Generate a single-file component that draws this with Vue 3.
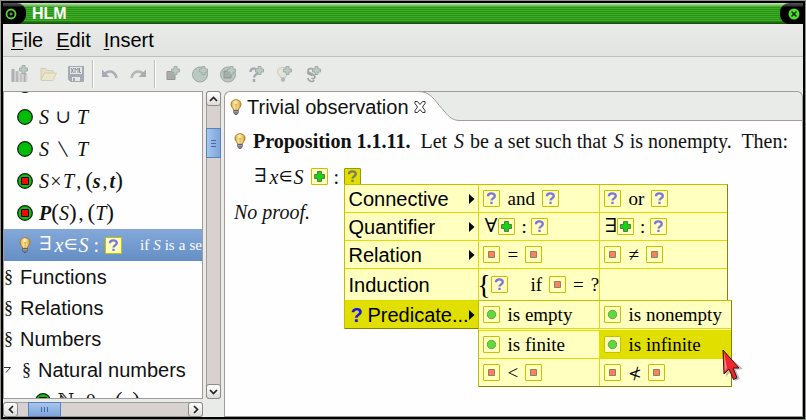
<script setup>
const menus = ['File', 'Edit', 'Insert']
const tools = [
  ['books', 'New library'], ['folder', 'Open'], ['disk', 'Save as XML'], null,
  ['undo', 'Undo'], ['redo', 'Redo'], null,
  ['t-square', 'Insert constructor'], ['t-circle', 'Insert set operator'], ['t-both', 'Insert construction'],
  ['t-question', 'Insert predicate'], ['t-bulb', 'Insert theorem'], ['t-section', 'Insert section']
]
// Token kinds: v = variable, b = bold variable, o = spaced operator, x = tight operator, p = parenthesis, c/k = comma
const treeRows = [
  { icon: 'dot', tokens: [] },
  { icon: 'dot', tokens: [['v', 'S'], ['o', '∪'], ['v', 'T']] },
  { icon: 'dot', tokens: [['v', 'S'], ['o', '∖'], ['v', 'T']] },
  { icon: 'dotsq', tokens: [['v', 'S'], ['x', '×'], ['v', 'T'], ['c', ','], ['p', '('], ['b', 's'], ['k', ','], ['b', 't'], ['p', ')']] },
  { icon: 'dotsq', tokens: [['b', 'P'], ['p', '('], ['v', 'S'], ['p', ')'], ['c', ','], ['p', '('], ['v', 'T'], ['p', ')']] }
]
const sections = ['Functions', 'Relations', 'Numbers']
const popup = [
  { label: 'Connective', arrow: true, cells: [[['box', 'q'], ['w', 'and'], ['box', 'q']], [['box', 'q'], ['w', 'or'], ['box', 'q']]] },
  { label: 'Quantifier', arrow: true, tight: true, cells: [[['q', '∀'], ['box', 'plus'], ['colon', ':'], ['box', 'q']], [['q', '∃'], ['box', 'plus'], ['colon', ':'], ['box', 'q']]] },
  { label: 'Relation', arrow: true, cells: [[['box', 'sq'], ['m', '='], ['box', 'sq']], [['box', 'sq'], ['m', '≠'], ['box', 'sq']]] },
  { label: 'Induction', tall: true, cells: [[['brace', '{'], ['box', 'q'], ['if', 'if'], ['box', 'sq'], ['m', '='], ['w', '?']], []] },
  { label: 'Predicate...', arrow: true, active: true, cells: [] }
]
const submenu = [
  { cells: [[['box', 'cir'], ['w', 'is empty']], [['box', 'cir'], ['w', 'is nonempty']]] },
  { first: true, active: true, cells: [[['box', 'cir'], ['w', 'is finite']], [['box', 'cir'], ['w', 'is infinite']]] },
  { cells: [[['box', 'sq'], ['m', '<'], ['box', 'sq']], [['box', 'sq'], ['n', '≮'], ['box', 'sq']]] }
]
</script>

<template>
  <svg class="defs" aria-hidden="true">
    <defs>
      <linearGradient id="glow" x1="0" x2="1"><stop offset="0" stop-color="#d9a93c" /><stop offset=".45" stop-color="#fff3b8" /><stop offset="1" stop-color="#d39a2c" /></linearGradient>
    </defs>
    <symbol id="i-bulb" viewBox="0 0 12 16">
      <path d="M6 .7C2.800.7 1 2.800 1 5.300c0 2.600 2.300 3.600 2.600 6h4.800c.3-2.400 2.600-3.400 2.600-6C11 2.800 9.200.7 6 .7z" fill="url(#glow)" stroke="#a9762b" />
      <path d="M5 5l1 1.500L7 5M6 6.500V11" stroke="#c89334" fill="none" stroke-width=".8" />
      <path d="M3.700 11.500h4.600v2.300L7 15.500H5l-1.300-1.700z" fill="#77777c" stroke="#55555a" stroke-width=".7" />
      <path d="M4 12.800h4" stroke="#c5c5c8" stroke-width=".7" />
    </symbol>
    <symbol id="i-dot" viewBox="0 0 16 16"><circle cx="8" cy="8" r="7.300" fill="#00bc08" stroke="#10230f" stroke-width="1.300" /></symbol>
    <symbol id="i-dotsq" viewBox="0 0 16 16"><circle cx="8" cy="8" r="7.300" fill="#10bc10" stroke="#10230f" stroke-width="1.300" /><path d="M4.500 4.500h7v7h-7z" fill="#f00" stroke="#300" /></symbol>
    <symbol id="i-q" viewBox="0 0 17 17"><path d="M4.900 6.300C4.900 2.400 11.800 2.500 11.800 6.100c0 2.300-3.300 2.200-3.300 4.500M8.500 11.800v2.300" fill="none" stroke="currentColor" stroke-width="2.300" /></symbol>
    <symbol id="i-plus" viewBox="0 0 17 17"><path d="M6.500 3.500h4v3h3v4h-3v3h-4v-3h-3v-4h3z" fill="#12d612" stroke="#5d7550" stroke-linejoin="round" /></symbol>
    <symbol id="i-sq" viewBox="0 0 17 17"><path d="M5.500 5.500h6v6h-6z" fill="#ff8060" stroke="#8e8258" /></symbol>
    <symbol id="i-cir" viewBox="0 0 17 17"><circle cx="8.500" cy="8.500" r="4.200" fill="#5cdc3c" stroke="#70a048" /></symbol>
    <symbol id="badge" viewBox="0 0 9 9"><path d="M3 .5h3V3h2.500v3H6v2.500H3V6H.5V3H3z" fill="#bccac4" stroke="#a3aca8" /></symbol>
    <symbol id="i-books" viewBox="0 0 18 18">
      <path d="M2 4v13M14 8v9" stroke="#aab0b8" stroke-width="3" /><path d="M6 6v11" stroke="#b5b9b9" stroke-width="3" /><path d="M10 8v9" stroke="#cfbfc1" stroke-width="3" /><path d="M15.500 10v7" stroke="#ddcfd5" stroke-width="2" />
      <use href="#badge" x="8" y="0" width="9" height="9" />
    </symbol>
    <symbol id="i-folder" viewBox="0 0 18 18"><path d="M2 15V3.500h5l1.500 2H14V8" fill="#e5e0c9" stroke="#d2ccb8" /><path d="M2 15.500 5 8h12.500L14 15.500z" fill="#ebe5ca" stroke="#d4ccb4" /></symbol>
    <symbol id="i-disk" viewBox="0 0 18 18">
      <path d="M1.500 1.500h15v15h-13l-2-2z" fill="#a5a9b1" stroke="#a5a9b1" /><path d="M3 2h12v7H3zM5 12h8v4H5z" fill="#e5e7e6" /><path d="M6 13h2v3H6z" fill="#a5a9b1" />
      <path d="M4 3l2.500 5M6.500 3 4 8M8 8V3l1.500 2L11 3v5M12.500 3v4.500H14" fill="none" stroke="#8d918f" />
    </symbol>
    <symbol id="i-undo" viewBox="0 0 18 18"><path d="M4 8.500c4-3.500 10-2.500 11.500 4.500" fill="none" stroke="#abafb5" stroke-width="2.600" /><path d="M1 4.500V12h7.500z" fill="#a6aab2" /></symbol>
    <symbol id="i-redo" viewBox="0 0 18 18"><path d="M14 8.500C10 5 4 6 2.500 13" fill="none" stroke="#b1b6b8" stroke-width="2.600" /><path d="M17 4.500V12H9.500z" fill="#a8adb3" /></symbol>
    <symbol id="i-t-square" viewBox="0 0 18 18"><path d="M4 6.500h8v8H4z" fill="#a9aba9" stroke="#959795" /><use href="#badge" x="8" y="1" width="9" height="9" /></symbol>
    <symbol id="i-t-circle" viewBox="0 0 18 18"><circle cx="9" cy="9.500" r="7.500" fill="#b9c9c2" stroke="#9ca7a2" /><use href="#badge" x="8" y="1" width="9" height="9" /></symbol>
    <symbol id="i-t-both" viewBox="0 0 18 18"><circle cx="9" cy="9.500" r="7.500" fill="#b9c9c2" stroke="#9ca7a2" /><path d="M5 6h7v7H5z" fill="#a9aeac" stroke="#909693" /><use href="#badge" x="8" y="1" width="9" height="9" /></symbol>
    <symbol id="i-t-question" viewBox="0 0 18 18"><path d="M3.500 7C3.500 2 11 3 11 7c0 2-4 2.500-4 5.500M7 14v3" fill="none" stroke="#a6a9b3" stroke-width="2.500" /><use href="#badge" x="8" y="1" width="9" height="9" /></symbol>
    <symbol id="i-t-bulb" viewBox="0 0 18 18"><path d="M8 2.500c-4 0-5.500 2-5.500 4.500s2.700 3 3 5.500h5c.3-2.500 3-3 3-5.500S12 2.500 8 2.500z" fill="#e5e4dc" stroke="#c6c4bb" /><path d="M6 13h4v3l-2 1-2-1z" fill="#b8bab9" /><use href="#badge" x="8" y="1" width="9" height="9" /></symbol>
    <symbol id="i-t-section" viewBox="0 0 18 18"><path d="M11 5C9 2.500 4.500 3.500 5 6c.5 2.500 7 3 7 6 0 1.800-2.500 2-3.500 1M9 10.500C7 9 4 9.500 5 7M5 13c0 3 5 5 6 2" fill="none" stroke="#a4a6a5" stroke-width="1.700" /><use href="#badge" x="9" y="1" width="9" height="9" /></symbol>
  </svg>

  <div class="window">
    <header class="titlebar">
      <button class="cap cap-left" aria-label="Window menu">
        <svg width="12" height="12" viewBox="0 0 12 12"><circle cx="6" cy="6" r="4.500" fill="none" stroke="#53d835" stroke-width="1.800" /><path d="M6 4.500v3M4.500 6h3" stroke="#75d85b" /></svg>
      </button>
      <h1>HLM</h1>
      <button class="cap cap-right" aria-label="Close window">
        <svg width="12" height="12" viewBox="0 0 12 12"><circle cx="6" cy="6" r="5.500" fill="#55dc35" /><path d="M3.500 3.500l5 5M8.500 3.500l-5 5" stroke="#0c3205" stroke-width="1.500" /></svg>
      </button>
    </header>

    <nav class="menubar">
      <button v-for="m in menus" :key="m"><u>{{ m[0] }}</u>{{ m.slice(1) }}</button>
    </nav>

    <div class="toolbar">
      <template v-for="(t, i) in tools" :key="i">
        <button v-if="t" :aria-label="t[1]"><svg width="18" height="18"><use :href="'#i-' + t[0]" /></svg></button>
        <span v-else class="sep"></span>
      </template>
    </div>

    <main class="work">
      <aside class="side">
        <ul class="tree">
          <li v-for="(r, i) in treeRows" :key="i" class="math-row">
            <svg width="16" height="16"><use :href="'#i-' + r.icon" /></svg>
            <span class="math"><span v-for="(k, j) in r.tokens" :key="j" :class="'k-' + k[0]">{{ k[1] }}</span></span>
          </li>
          <li class="math-row selected">
            <svg width="16" height="16"><use href="#i-bulb" /></svg>
            <span class="math"><span class="k-q">∃</span><span class="k-v">x</span><span class="k-e">∈</span><span class="k-v">S</span><span class="k-colon">:</span></span>
            <span class="box box-q"><svg width="17" height="17"><use href="#i-q" /></svg></span>
            <span class="cond"><span>if</span><i>S</i><span>is</span><span>a</span><span>set</span></span>
          </li>
          <li v-for="s in sections" :key="s" class="section"><span class="para">§</span>{{ s }}</li>
          <li class="section nested"><svg width="8" height="8"><path d="M0 1.500h6.500L2 6.500" fill="none" stroke="#333" /></svg><span class="para">§</span>Natural numbers</li>
          <li class="math-row inner">
            <svg width="16" height="16"><use href="#i-dotsq" /></svg>
            <span class="math"><span class="k-n">ℕ</span><span class="k-c">,</span><span>0</span><span class="k-c">,</span><span class="k-b">s</span><span class="k-p">(</span><span class="k-v">n</span><span class="k-p">)</span></span>
          </li>
        </ul>
        <div class="bar vertical">
          <button aria-label="Scroll up"><svg width="9" height="6"><path d="M1 5l3.500-3.500L8 5" /></svg></button>
          <span class="gap-v"></span><span class="thumb"><i></i><i></i><i></i></span><span class="rest"></span>
          <button aria-label="Scroll down"><svg width="9" height="6"><path d="M1 1l3.500 3.500L8 1" /></svg></button>
        </div>
        <div class="bar horizontal">
          <button aria-label="Scroll left"><svg width="6" height="9"><path d="M5 1L1.500 4.500 5 8" /></svg></button>
          <span class="gap-h"></span><span class="thumb"><i></i><i></i><i></i></span><span class="rest"></span>
          <button aria-label="Scroll right"><svg width="6" height="9"><path d="M1 1l3.500 3.500L1 8" /></svg></button>
        </div>
      </aside>

      <section class="editor">
        <div class="tabs">
          <div class="tab">
            <svg width="12" height="16"><use href="#i-bulb" /></svg>
            <button class="tab-name">Trivial observation</button>
            <button class="tab-close" aria-label="Close tab">
              <svg width="12" height="12"><path d="M1 .5h2.500l2.500 3 2.500-3H11v2L8.500 6l2.500 3.500v2H8.500l-2.500-3-2.500 3H1v-2L3.500 6 1 2.500z" fill="#fff" stroke="#333" /></svg>
            </button>
          </div>
          <div class="tab-space">
            <svg class="curve" width="42" height="30"><path d="M0 .5C13 .5 16 9 24 17.500c6 7 9 12 18 12V30H0z" fill="#fefefe" /><path d="M0 .5C13 .5 16 9 24 17.500c6 7 9 12 18 12M0 .5h42" fill="none" stroke="#a39c9b" /></svg>
            <span class="strip"></span>
          </div>
        </div>

        <article class="doc">
          <p class="prop">
            <svg width="12" height="16"><use href="#i-bulb" /></svg>
            <b>Proposition 1.1.11.</b>
            <span>Let <i>S</i> be a set such that <i>S</i> is nonempty.&nbsp; Then:</span>
          </p>
          <div class="formula">
            <span class="math"><span class="k-q">∃</span><span class="k-v">x</span><span class="k-e">∈</span><span class="k-v">S</span></span>
            <button class="box box-plus" aria-label="Add condition"><svg width="17" height="17"><use href="#i-plus" /></svg></button>
            <span class="colon">:</span>
            <div class="anchor">
              <button class="box box-open" aria-label="Fill placeholder"><svg width="17" height="17"><use href="#i-q" /></svg></button>
              <div class="popup" role="menu">
                <div v-for="r in popup" :key="r.label" class="prow" :class="{ tall: r.tall, active: r.active, tight: r.tight }">
                  <button class="plabel"><span v-if="r.active" class="mark">?</span>{{ r.label }}<svg v-if="r.arrow" class="arrow" width="6" height="10"><path d="M0 0l5.500 5-5.500 5z" /></svg></button>
                  <button v-for="(c, ci) in r.cells" :key="ci" class="cell">
                    <template v-for="(k, j) in c" :key="j">
                      <span v-if="k[0] === 'box'" class="box" :class="'box-' + k[1]"><svg width="17" height="17"><use :href="'#i-' + k[1]" /></svg></span>
                      <span v-else :class="'p-' + k[0]">{{ k[1] }}</span>
                    </template>
                  </button>
                </div>
                <div class="submenu" role="menu">
                  <div v-for="(r, ri) in submenu" :key="ri" class="srow" :class="{ first: r.first }">
                    <button v-for="(c, ci) in r.cells" :key="ci" class="cell" :class="{ chosen: r.active && ci === 1 }">
                      <template v-for="(k, j) in c" :key="j">
                        <span v-if="k[0] === 'box'" class="box" :class="'box-' + k[1]"><svg width="17" height="17"><use :href="'#i-' + k[1]" /></svg></span>
                        <span v-else :class="'p-' + k[0]">{{ k[1] }}</span>
                      </template>
                    </button>
                  </div>
                  <svg class="pointer" width="22" height="36" viewBox="0 0 22 36">
                    <path d="M3 4l1 24 5-6 4 10 5-2-4-9 7-1z" fill="#000" opacity=".25" />
                    <path d="M1 1l1 24 5-5 4.500 10.500 3.500-1.700L11 19h6z" fill="#f0252d" stroke="#3d0d10" stroke-linejoin="round" />
                    <path d="M2 3l.7 19L5 19.500z" fill="#ff8b8b" />
                  </svg>
                </div>
              </div>
            </div>
          </div>
          <p class="noproof">No proof.</p>
        </article>
      </section>
    </main>
  </div>
</template>

<style>
body { margin: 0; background: #8c8c8c; }
</style>

<style scoped>
* { box-sizing: border-box; }
button { margin: 0; padding: 0; border: 0; background: none; font: inherit; color: inherit; text-align: left; }
svg { display: block; flex: none; }
.defs { position: absolute; width: 0; height: 0; }
.window {
  display: flex; flex-direction: column; height: 100vh; overflow: hidden;
  border: 3px solid #000;
  background: #e9ebe8; color: #111; font: 20px/24px "Liberation Sans", Arial, sans-serif;
  outline: 1px solid #8c938b; outline-offset: -1px;
}
.titlebar {
  display: flex; align-items: center; flex: none; height: 21px;
  background:
    linear-gradient(#c3e6b8 0, #8fca7c 2px, transparent 4px, transparent 18px, #14540c 20px),
    repeating-linear-gradient(#24970f 0, #24970f 1px, #44a82e 1px, #44a82e 2px);
}
.titlebar h1 { flex: 1; margin: 0 0 0 6px; color: #fff; font-size: 16px; line-height: 20px; }
.cap { display: flex; align-items: center; width: 23px; height: 21px; background: linear-gradient(#555 0, #333 3px, #000 4px); }
.cap-left { padding-left: 2px; border-radius: 0 9px 9px 0; }
.cap-right { justify-content: flex-end; padding-right: 3px; border-radius: 9px 0 0 9px; }
.menubar {
  display: flex; align-items: center; gap: 13px; flex: none; height: 33px; padding-left: 8px;
  background: linear-gradient(#ebece9, #e1e3e0); border-bottom: 1px solid #bcbfbb; color: #000;
}
.menubar u { text-decoration-thickness: 1px; text-underline-offset: 2px; }
.toolbar { display: flex; align-items: center; flex: none; height: 34px; padding-left: 3px; }
.toolbar button { display: flex; justify-content: center; width: 28px; }
.sep { width: 2px; height: 28px; margin: 0 2px; background: linear-gradient(90deg, #bfc1be 50%, #fff 50%); }
.work { display: flex; flex: 1; min-height: 0; gap: 3px; }

.side { display: grid; grid-template-columns: 200px 15px; grid-template-rows: minmax(0, 1fr) 15px; gap: 3px; flex: none; }
.tree { margin: 0; padding: 0; list-style: none; overflow: hidden; background: #fefefe; border: 1px solid #a39c9b; }
.tree li { display: flex; align-items: center; white-space: nowrap; }
.tree li:first-child { margin-top: -23px; }
.math-row { height: 32px; gap: 6px; padding-left: 13px; }
.selected { background: linear-gradient(#84a9d9, #648ec5); color: #fff; }
.cond { display: flex; gap: 4px; margin-left: 12px; font: 15px/20px "Liberation Serif", serif; }
.section { height: 31px; gap: 8px; }
.para { font: 18px/24px "Liberation Serif", serif; width: 8px; }
.nested .para { margin-left: 2px; }
.inner { padding-left: 31px; }

.math { display: flex; align-items: center; font: 20px/24px "Liberation Serif", serif; white-space: pre; }
.k-v { font-style: italic; }
.k-b { font-style: italic; font-weight: bold; }
.k-o { width: 28px; text-align: center; font-family: "DejaVu Math TeX Gyre", "DejaVu Sans", sans-serif; font-size: 18px; }
.k-x { width: 14px; text-align: center; }
.k-q, .p-q { font-family: "DejaVu Math TeX Gyre", "DejaVu Sans", sans-serif; font-size: 19px; }
.k-q { margin-right: 3px; }
.k-e { width: 15px; text-align: center; font-family: "DejaVu Math TeX Gyre", "DejaVu Sans", sans-serif; font-size: 17px; }
.k-n { font-family: "DejaVu Math TeX Gyre", "DejaVu Sans", sans-serif; font-size: 18px; }
.k-p { font-size: 23px; }
.k-c { width: 11px; padding-left: 2px; }
.k-k { width: 9px; padding-left: 2px; }
.k-colon { padding-left: 5px; }

.bar { display: flex; background: #d7d2d0; border: 1px solid #a39c9b; border-radius: 3px; }
.bar button { display: flex; align-items: center; justify-content: center; flex: none; width: 15px; height: 15px; margin: -1px; background: linear-gradient(#fff, #dcdcda); border: 1px solid #8f8987; border-radius: 3px; }
.bar path { fill: none; stroke: #222; stroke-width: 1.7; }
.vertical { flex-direction: column; }
.gap-v { height: 23px; }
.gap-h { width: 11px; }
.rest { flex: 1; }
.thumb { display: flex; align-items: center; justify-content: center; gap: 2px; background: linear-gradient(90deg, #a7c5ee, #7ea4da); border: 1px solid #5a82ba; }
.vertical .thumb { flex-direction: column; height: 30px; margin: 0 -1px; }
.horizontal .thumb { width: 33px; margin: -1px 0; background: linear-gradient(#a7c5ee, #7ea4da); }
.thumb i { background: #426ca8; width: 5px; height: 1px; }
.vertical .thumb i { width: 5px; }
.horizontal .thumb i { width: 1px; height: 5px; }

.editor { display: flex; flex-direction: column; flex: 1; min-width: 0; }
.tabs { display: flex; height: 30px; flex: none; }
.tab { display: flex; align-items: center; gap: 5px; flex: none; padding-left: 5px; white-space: nowrap; background: #fefefe; border: solid #a39c9b; border-width: 1px 0 0 1px; border-radius: 6px 0 0 0; }
.tab-name, .tab-close { flex: none; }
.tab-close { position: relative; }
.tab-space { display: flex; flex: 1; margin-left: -8px; }
.curve { background: #e9ebe8; }
.strip { flex: 1; border: solid #a39c9b; border-width: 1px 1px 1px 0; border-radius: 0 6px 0 0; }
.doc { flex: 1; padding: 8px 0 0 9px; background: #fefefe; border: solid #a39c9b; border-width: 0 1px 1px; font: 20px/24px "Liberation Serif", serif; }
.prop { display: flex; align-items: center; gap: 7px; margin: 0; white-space: nowrap; }
.prop b { margin-right: 3px; }
.prop i { margin: 0 1px 0 2px; }
.formula { display: flex; align-items: center; height: 17px; margin: 15px 0 15px 20px; }
.formula > .box-plus { margin-left: 8px; }
.colon { width: 16px; padding-left: 5px; }
.noproof { margin: 0; font-style: italic; }

.box { display: flex; align-items: center; justify-content: center; flex: none; width: 17px; height: 17px; background: #ffffc0; border: 1px solid #c6c200; border-radius: 1px; color: #7c75dc; }
.box-open { background: #e0df00; border-color: #98960a; color: #7b7a62; }
.anchor { position: relative; }
.popup { position: absolute; z-index: 2; top: 16px; left: 0; width: 384px; background: #ffffc0; border: solid; border-width: 1px 1px 0; border-color: #c2bf00 #85830a #85830a #c2bf00; color: #000; }
.prow { display: grid; grid-template-columns: 133px 121px 1fr; height: 28px; border-bottom: 1px solid #dedc00; }
.prow.tall { height: 32px; }
.prow.active { width: 133px; background: #e0df00; border-bottom-color: #85830a; }
.plabel { display: flex; align-items: center; padding: 0 3px; font: 20px/24px "Liberation Sans", Arial, sans-serif; white-space: nowrap; }
.arrow { margin-left: auto; }
.mark { width: 19px; padding-left: 2px; color: #1a10f0; font-weight: bold; }
.cell { display: flex; align-items: center; gap: 7px; min-width: 0; padding-left: 4px; border-left: 1px solid #dedc00; font: 19px/24px "Liberation Serif", serif; white-space: nowrap; }
.tight .cell { gap: 0; }
.p-colon { width: 16px; padding-left: 6px; }
.p-brace { width: 5px; margin: 0 -2px; font: 28px/28px "Liberation Serif", serif; display: flex; justify-content: center; }
.p-if { padding-left: 15px; }
.p-n { font-family: "DejaVu Math TeX Gyre", "DejaVu Sans", sans-serif; font-size: 16px; }
.submenu { position: absolute; top: 115px; left: 133px; width: 254px; background: #ffffc0; border: 1px solid; border-color: #c2bf00 #85830a #85830a #c2bf00; }
.srow { display: grid; grid-template-columns: 120px 1fr; height: 28px; border-top: 1px solid #dedc00; }
.srow:first-child { height: 27px; border-top: 0; }
.srow.first { height: 30px; border-top: 3px double #dedc00; }
.srow .cell:first-child { border-left: 0; }
.srow .chosen { background: #e0df00; border-color: #e0df00; }
.pointer { position: absolute; top: 48px; left: 243px; }
</style>
